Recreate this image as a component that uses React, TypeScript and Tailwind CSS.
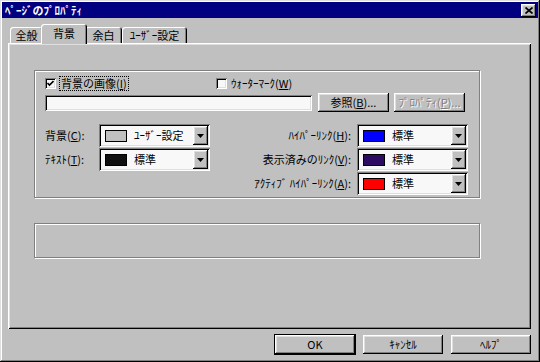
import type { ReactNode } from 'react';

const raised =
  'shadow-[inset_-1px_-1px_#000,inset_1px_1px_#fff,inset_-2px_-2px_#808080,inset_2px_2px_#dfdfdf]';
const sunken =
  'shadow-[inset_1px_1px_#808080,inset_-1px_-1px_#fff,inset_2px_2px_#000,inset_-2px_-2px_#dfdfdf]';
const etched = 'border border-[#808080] shadow-[inset_1px_1px_#fff,1px_1px_#fff]';

function Key({ k }: { k: string }) {
  return (
    <>
      (<span className="underline underline-offset-1">{k}</span>)
    </>
  );
}

function Button({
  children,
  width,
  disabled,
  primary,
}: {
  children: ReactNode;
  width: string;
  disabled?: boolean;
  primary?: boolean;
}) {
  return (
    <div
      className={`${width} h-[19px] flex items-center justify-center bg-[#c0c0c0] text-[11px] leading-none ${
        primary ? 'outline outline-1 outline-black' : ''
      } ${raised} ${disabled ? 'text-[#808080] [text-shadow:1px_1px_0_#fff]' : 'text-black'}`}
    >
      {children}
    </div>
  );
}

function Checkbox({ checked }: { checked?: boolean }) {
  return (
    <div className={`w-[11px] h-[11px] bg-[#f8f8f8] flex items-center justify-center ${sunken}`}>
      {checked && (
        <svg width="7" height="7" viewBox="0 0 7 7">
          <path d="M0.5 3 L2.5 5 L6.5 1" fill="none" stroke="#000" strokeWidth="1.6" />
        </svg>
      )}
    </div>
  );
}

function ColorSelect({ color, label }: { color: string; label: string }) {
  return (
    <div className={`w-[111px] h-[23px] flex items-center bg-[#f8f8f8] ${sunken}`}>
      <div className="ml-[6px] w-[22px] h-[12px] border border-black" style={{ background: color }} />
      <span className="ml-[7px] text-[11px] leading-none">{label}</span>
      <div className={`ml-auto mr-[2px] w-[15px] h-[19px] bg-[#c0c0c0] flex items-center justify-center ${raised}`}>
        <svg width="7" height="4" viewBox="0 0 7 4">
          <path d="M0 0 H7 L3.5 4 Z" fill="#000" />
        </svg>
      </div>
    </div>
  );
}

function Tab({ label, active, width }: { label: string; active?: boolean; width: string }) {
  return (
    <div
      className={`${width} flex items-center justify-center rounded-t-[3px] bg-[#c0c0c0] text-[11px] leading-none shadow-[inset_1px_1px_#fff,inset_-1px_0_#000,inset_-2px_0_#808080] ${
        active ? 'h-[20px] mb-[-1px] -mx-[2px] relative z-20 pb-[2px]' : 'h-[16px] pt-[1px]'
      }`}
    >
      {label}
    </div>
  );
}

export default function App() {
  return (
    <div
      className={`w-[540px] h-[362px] bg-[#c0c0c0] p-[2px] flex flex-col text-black font-['Noto_Sans_CJK_JP','Liberation_Sans',sans-serif] shadow-[inset_-1px_-1px_#000,inset_1px_1px_#dfdfdf,inset_-2px_-2px_#808080,inset_2px_2px_#fff]`}
    >
      {/* title bar */}
      <div className="h-[16px] bg-[#000080] flex items-center justify-between pl-[3px] pr-[2px]">
        <span className="text-white text-[11px] font-bold leading-none">ﾍﾟｰｼﾞのﾌﾟﾛﾊﾟﾃｨ</span>
        <div className={`w-[15px] h-[13px] bg-[#c0c0c0] flex items-center justify-center ${raised}`}>
          <svg width="8" height="7" viewBox="0 0 8 7">
            <path d="M0.5 0.5 L7.5 6.5 M7.5 0.5 L0.5 6.5" stroke="#000" strokeWidth="1.7" />
          </svg>
        </div>
      </div>

      <div className="flex-1 flex flex-col pl-[6px] pr-[7px] pt-[6px]">
        {/* tabs */}
        <div className="flex items-end h-[19px] pl-[2px] relative z-10">
          <Tab label="全般" width="w-[33px]" />
          <Tab label="背景" width="w-[46px]" active />
          <Tab label="余白" width="w-[37px]" />
          <Tab label="ﾕｰｻﾞｰ設定" width="w-[65px]" />
        </div>

        {/* panel */}
        <div className="h-[286px] pt-[27px] pl-[26px] shadow-[inset_1px_1px_#fff,inset_-1px_-1px_#000,inset_2px_2px_#dfdfdf,inset_-2px_-2px_#808080]">
          <div className={`w-[446px] h-[128px] pl-[10px] pt-[6px] ${etched}`}>
            <div className="flex items-center h-[13px] text-[11px] leading-none">
              <div className="w-[171px] flex items-center">
                <Checkbox checked />
                <span className="ml-[4px] px-[1px] py-[1px] outline outline-1 outline-dotted outline-black">
                  背景の画像<Key k="I" />
                </span>
              </div>
              <div className="flex items-center">
                <Checkbox />
                <span className="ml-[4px]">
                  ｳｫｰﾀｰﾏｰｸ<Key k="W" />
                </span>
              </div>
            </div>

            <div className="mt-[3px] flex items-center">
              <div className={`w-[267px] h-[16px] bg-[#f8f8f8] ${sunken}`} />
              <div className="ml-[6px]">
                <Button width="w-[71px]">
                  参照<Key k="B" />...
                </Button>
              </div>
              <div className="ml-[5px]">
                <Button width="w-[71px]" disabled>
                  ﾌﾟﾛﾊﾟﾃｨ<Key k="P" />...
                </Button>
              </div>
            </div>

            <div className="mt-[12px] flex text-[11px] leading-none">
              <div className="w-[165px] flex flex-col gap-[1px]">
                <div className="h-[23px] flex items-center">
                  <span className="w-[54px]">
                    背景<Key k="C" />:
                  </span>
                  <ColorSelect color="#c0c0c0" label="ﾕｰｻﾞｰ設定" />
                </div>
                <div className="h-[23px] flex items-center">
                  <span className="w-[54px]">
                    ﾃｷｽﾄ<Key k="T" />:
                  </span>
                  <ColorSelect color="#101010" label="標準" />
                </div>
              </div>
              <div className="w-[258px] flex flex-col gap-[1px]">
                <div className="h-[23px] flex items-center justify-end">
                  <span className="pr-[6px]">
                    ﾊｲﾊﾟｰﾘﾝｸ<Key k="H" />:
                  </span>
                  <ColorSelect color="#0000ff" label="標準" />
                </div>
                <div className="h-[23px] flex items-center justify-end">
                  <span className="pr-[6px]">
                    表示済みのﾘﾝｸ<Key k="V" />:
                  </span>
                  <ColorSelect color="#2e0b62" label="標準" />
                </div>
                <div className="h-[23px] flex items-center justify-end">
                  <span className="pr-[6px]">
                    ｱｸﾃｨﾌﾞ ﾊｲﾊﾟｰﾘﾝｸ<Key k="A" />:
                  </span>
                  <ColorSelect color="#ff0000" label="標準" />
                </div>
              </div>
            </div>
          </div>

          <div className={`mt-[25px] w-[446px] h-[35px] ${etched}`} />
        </div>

        {/* dialog buttons */}
        <div className="mt-[6px] flex justify-end gap-[8px]">
          <Button width="w-[80px]" primary>
            OK
          </Button>
          <Button width="w-[80px]">ｷｬﾝｾﾙ</Button>
          <Button width="w-[80px]">ﾍﾙﾌﾟ</Button>
        </div>
      </div>
    </div>
  );
}
